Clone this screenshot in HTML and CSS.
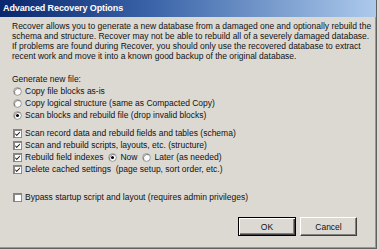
FILE: index.html
```html
<!DOCTYPE html>
<html>
<head>
<meta charset="utf-8">
<link rel="stylesheet" href="styles.css">
</head>
<body>
<div class="window">
  <div class="titlebar">Advanced Recovery Options</div>
  <div class="content">
    <p class="intro">Recover allows you to generate a new database from a damaged one and optionally rebuild the<br>schema and structure. Recover may not be able to rebuild all of a severely damaged database.<br>If problems are found during Recover, you should only use the recovered database to extract<br>recent work and move it into a known good backup of the original database.</p>
    <div class="row label-row">Generate new file:</div>
    <div class="row"><svg class="radio" viewBox="0 0 10 10"><circle cx="5" cy="5" r="4.3" fill="#fff" stroke="#808080" stroke-width="0.9"/><path d="M2.2 7.6 A4 4 0 0 1 7.6 2.2" fill="none" stroke="#404040" stroke-width="0.7"/></svg><span>Copy file blocks as-is</span></div>
    <div class="row"><svg class="radio" viewBox="0 0 10 10"><circle cx="5" cy="5" r="4.3" fill="#fff" stroke="#808080" stroke-width="0.9"/><path d="M2.2 7.6 A4 4 0 0 1 7.6 2.2" fill="none" stroke="#404040" stroke-width="0.7"/></svg><span>Copy logical structure (same as Compacted Copy)</span></div>
    <div class="row"><svg class="radio" viewBox="0 0 10 10"><circle cx="5" cy="5" r="4.3" fill="#fff" stroke="#808080" stroke-width="0.9"/><path d="M2.2 7.6 A4 4 0 0 1 7.6 2.2" fill="none" stroke="#404040" stroke-width="0.7"/><circle cx="5" cy="5" r="1.7" fill="#000"/></svg><span>Scan blocks and rebuild file (drop invalid blocks)</span></div>
    <div class="checks">
      <div class="row"><svg class="check" viewBox="0 0 10 10"><rect x="0.5" y="0.5" width="9" height="9" fill="#fff" stroke="#808080"/><path d="M1.5 9 V1.5 H9" fill="none" stroke="#404040" stroke-width="0.8"/><path d="M2.6 4.6 L4.2 6.3 L7.6 2.9 V4.3 L4.2 7.7 L2.6 6 Z" fill="#000"/></svg><span>Scan record data and rebuild fields and tables (schema)</span></div>
      <div class="row"><svg class="check" viewBox="0 0 10 10"><rect x="0.5" y="0.5" width="9" height="9" fill="#fff" stroke="#808080"/><path d="M1.5 9 V1.5 H9" fill="none" stroke="#404040" stroke-width="0.8"/><path d="M2.6 4.6 L4.2 6.3 L7.6 2.9 V4.3 L4.2 7.7 L2.6 6 Z" fill="#000"/></svg><span>Scan and rebuild scripts, layouts, etc. (structure)</span></div>
      <div class="row"><svg class="check" viewBox="0 0 10 10"><rect x="0.5" y="0.5" width="9" height="9" fill="#fff" stroke="#808080"/><path d="M1.5 9 V1.5 H9" fill="none" stroke="#404040" stroke-width="0.8"/><path d="M2.6 4.6 L4.2 6.3 L7.6 2.9 V4.3 L4.2 7.7 L2.6 6 Z" fill="#000"/></svg><span class="idx">Rebuild field indexes</span><svg class="radio" viewBox="0 0 10 10"><circle cx="5" cy="5" r="4.3" fill="#fff" stroke="#808080" stroke-width="0.9"/><path d="M2.2 7.6 A4 4 0 0 1 7.6 2.2" fill="none" stroke="#404040" stroke-width="0.7"/><circle cx="5" cy="5" r="1.7" fill="#000"/></svg><span class="now">Now</span><svg class="radio" viewBox="0 0 10 10"><circle cx="5" cy="5" r="4.3" fill="#fff" stroke="#808080" stroke-width="0.9"/><path d="M2.2 7.6 A4 4 0 0 1 7.6 2.2" fill="none" stroke="#404040" stroke-width="0.7"/></svg><span>Later (as needed)</span></div>
      <div class="row"><svg class="check" viewBox="0 0 10 10"><rect x="0.5" y="0.5" width="9" height="9" fill="#fff" stroke="#808080"/><path d="M1.5 9 V1.5 H9" fill="none" stroke="#404040" stroke-width="0.8"/><path d="M2.6 4.6 L4.2 6.3 L7.6 2.9 V4.3 L4.2 7.7 L2.6 6 Z" fill="#000"/></svg><span>Delete cached settings&nbsp; (page setup, sort order, etc.)</span></div>
    </div>
    <div class="row bypass"><svg class="check" viewBox="0 0 10 10"><rect x="0.5" y="0.5" width="9" height="9" fill="#fff" stroke="#808080"/><path d="M1.5 9 V1.5 H9" fill="none" stroke="#404040" stroke-width="0.8"/></svg><span>Bypass startup script and layout (requires admin privileges)</span></div>
    <div class="buttons">
      <div class="btn default"><span>OK</span></div>
      <div class="btn"><span>Cancel</span></div>
    </div>
  </div>
</div>
</body>
</html>
```
FILE: styles.css
```css
html, body {
  margin: 0;
  padding: 0;
  background: #dcd9d3;
}
body {
  font-family: "Liberation Sans", Arial, sans-serif;
  font-size: 8.5px;
  color: #111;
}
.window {
  width: 376px;
  height: 248px;
  background: #dcd9d3;
  border-right: 1px solid #606060;
  border-bottom: 1px solid #606060;
  box-shadow: inset -1px -1px 0 #9a9893;
  display: flex;
  flex-direction: column;
}
.titlebar {
  height: 17px;
  line-height: 17px;
  padding-left: 3px;
  background: linear-gradient(to right, #0a266c 0%, #3a64a8 40%, #adcaec 100%);
  color: #fff;
  font-weight: bold;
  font-size: 9px;
  letter-spacing: -0.1px;
}
.content {
  padding-left: 12px;
  display: flex;
  flex-direction: column;
}
.intro {
  margin: 4px 0 0 0;
  font-size: 8.5px;
  line-height: 10px;
  white-space: nowrap;
}
.row {
  height: 12px;
  display: flex;
  align-items: center;
  white-space: nowrap;
}
.label-row {
  margin-top: 12px;
}
.radio, .check {
  width: 9px;
  height: 9px;
  margin-left: 1px;
  margin-right: 3px;
  flex: none;
}
.checks {
  margin-top: 6px;
}
.idx {
  margin-right: 4px;
}
.now {
  margin-right: 4px;
}
.bypass {
  margin-top: 16px;
}
.buttons {
  margin-top: 14px;
  margin-right: 19px;
  display: flex;
  justify-content: flex-end;
  gap: 4px;
}
.btn {
  width: 57px;
  height: 19px;
  box-sizing: border-box;
  background: #dcd9d3;
  border-top: 1px solid #fff;
  border-left: 1px solid #fff;
  border-right: 1px solid #404040;
  border-bottom: 1px solid #404040;
  box-shadow: inset -1px -1px 0 #808080;
  display: flex;
  align-items: center;
  justify-content: center;
}
.btn.default {
  width: 58px;
  border: 1px solid #000;
  box-shadow: inset 1px 1px 0 #fff, inset -1px -1px 0 #404040, inset -2px -2px 0 #808080;
}
```
